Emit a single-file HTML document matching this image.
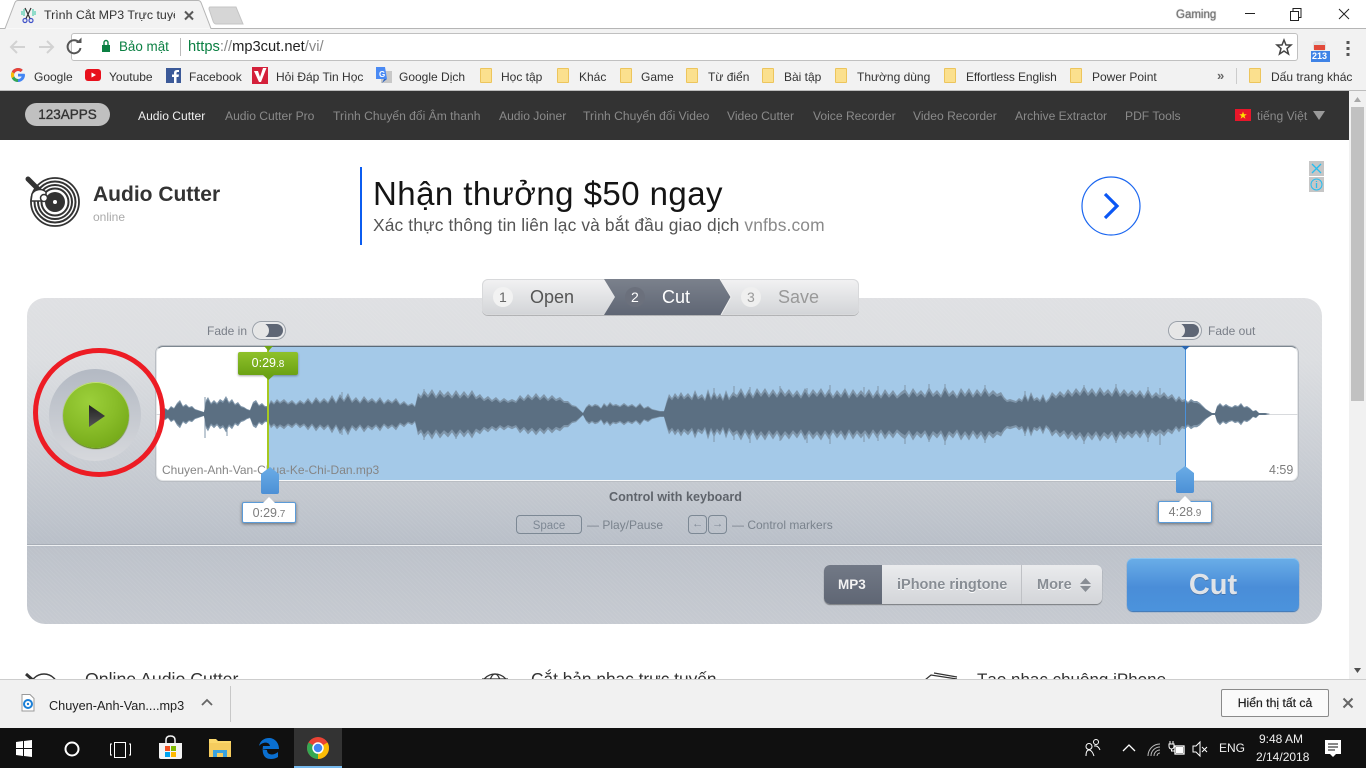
<!DOCTYPE html>
<html lang="vi">
<head>
<meta charset="utf-8">
<title>Trình Cắt MP3 Trực tuyến</title>
<style>
html,body{margin:0;padding:0;width:1366px;height:768px;overflow:hidden;background:#fff;font-family:"Liberation Sans","Noto Sans CJK SC",sans-serif}
div,span,svg{position:absolute;display:block}
b,i,small,em{position:static;display:inline}
.t{white-space:nowrap;line-height:1}
.b{font-size:12px;color:#333;top:71px}
.n{font-size:12.1px;color:#8a8a8a;top:110px}
.f{top:68px;width:12px;height:15px;background:#fbe08e;border:1px solid #edc55c;box-sizing:border-box;border-radius:1px}
.tm{background:#fff;border:1px solid #5b9bd8;border-radius:2px;box-shadow:0 1px 3px rgba(0,0,0,.45);box-sizing:border-box;text-align:center;color:#7d7d7d;font-size:12.5px;line-height:20px}
.tm small{font-size:10px}
.k{border:1px solid #7c8894;border-radius:4px;box-sizing:border-box;color:#7e8894;text-align:center;font-size:11.5px}
</style>
</head>
<body>

<!-- Window frame / tabs -->
<div style="left:0;top:0;width:1366px;height:29px;background:#fff"></div>
<svg style="left:0;top:0" width="1366" height="30" viewBox="0 0 1366 30">
<path d="M0 28.500H5L15 2.500Q16 .5 18 .5H198Q200 .5 201 2.500L211 28.500H1366" fill="#f2f2f2" stroke="#b5b5b5"/>
<path d="M210 7H236L243 24H216Q214 24 213 21L209 9Q209 7 210 7Z" fill="#d6d6d6" stroke="#c4c4c4"/>
<g fill="none" stroke="#3f51c8" stroke-width="1.200"><circle cx="25" cy="20.500" r="2"/><circle cx="31" cy="20.500" r="2"/><path d="M26 18.500L31 8M30 18.500L25 8" stroke="#333"/></g>
<path d="M22 11V15M24 9V16M33 9V16M35 11V15" stroke="#2fc4a0" stroke-width="1"/>
<path d="M185 11.500L193 19.500M193 11.500L185 19.500" stroke="#5a5a5a" stroke-width="2"/>
</svg>
<div class="t" style="left:44px;top:9px;width:131px;overflow:hidden;font-size:12.4px;color:#333">Trình Cắt MP3 Trực tuyến</div>
<div class="t" style="left:1176px;top:10px;font-size:11.5px;color:#777;text-shadow:0 0 1px #555">Gaming</div>
<svg style="left:1230px;top:0" width="136" height="28" viewBox="0 0 136 28">
<path d="M15 13.500H25" stroke="#222" stroke-width="1"/>
<path d="M60.500 11.500H68.500V20.500H60.500ZM63 11V8.500H71V17.500H69" fill="none" stroke="#222"/>
<path d="M109 9L119 19M119 9L109 19" stroke="#222" stroke-width="1"/>
</svg>

<!-- Toolbar -->
<div style="left:0;top:29px;width:1366px;height:61px;background:#f2f2f2"></div>
<div style="left:0;top:90px;width:1366px;height:1px;background:#bdbdbd"></div>
<div style="left:71px;top:33px;width:1227px;height:28px;background:#fff;border:1px solid #c0c0c0;border-radius:3px;box-sizing:border-box"></div>
<svg style="left:0;top:30px" width="130" height="32" viewBox="0 0 130 32">
<g fill="none" stroke="#d2d2d2" stroke-width="2"><path d="M25 17H11M17 11L11 17L17 23"/><path d="M39 17H53M47 11L53 17L47 23"/></g>
<path d="M79 12.500A6.500 6.500 0 1 0 80.500 18" fill="none" stroke="#555" stroke-width="2"/>
<path d="M76 13H81.500V7.500Z" fill="#555"/>
<rect x="102" y="15" width="8" height="7" fill="#0b8043"/>
<path d="M104 15V12.500A2 2 0 0 1 108 12.500V15" fill="none" stroke="#0b8043" stroke-width="1.400"/>
</svg>
<div class="t" style="left:119px;top:40px;font-size:13.4px;color:#0b8043">Bảo mật</div>
<div style="left:180px;top:38px;width:1px;height:18px;background:#bbb"></div>
<div class="t" style="left:188px;top:40px;font-size:14.700px;color:#0b8043">https<b style="font-weight:normal;color:#888">://</b><b style="font-weight:normal;color:#222">mp3cut.net</b><b style="font-weight:normal;color:#888">/vi/</b></div>
<svg style="left:1275px;top:38px" width="18" height="18" viewBox="0 0 18 18"><path d="M9 2L11 7H16L12 10.500L13.500 16L9 13L4.500 16L6 10.500L2 7H7Z" fill="none" stroke="#444" stroke-width="1.500"/></svg>
<svg style="left:1310px;top:40px" width="24" height="22" viewBox="0 0 24 22"><rect x="3" y="1" width="13" height="10" rx="3" fill="#e0e0e0"/><rect x="4" y="5" width="11" height="5" fill="#e24a3a"/><rect x="1" y="11" width="19" height="11" fill="#3f83e6"/></svg>
<div class="t" style="left:1312px;top:52px;font-size:9px;color:#fff;font-weight:bold">213</div>
<svg style="left:1343px;top:38px" width="10" height="20" viewBox="0 0 10 20"><g fill="#555"><rect x="3.500" y="3" width="3" height="3"/><rect x="3.500" y="9" width="3" height="3"/><rect x="3.500" y="15" width="3" height="3"/></g></svg>

<!-- Bookmarks -->
<svg style="left:10px;top:67px" width="16" height="16" viewBox="0 0 16 16">
<path d="M14.500 6.700H8V9.500H11.700C11.200 11 9.800 12 8 12A4 4 0 1 1 10.700 5L12.800 2.900A7 7 0 1 0 15 8Q15 7.300 14.500 6.700Z" fill="#4285f4"/>
<path d="M1.800 4.700L4.300 6.500A4 4 0 0 1 10.700 5L12.800 2.900A7 7 0 0 0 1.800 4.700Z" fill="#ea4335"/>
<path d="M1.800 11.300L4.300 9.500A4 4 0 0 0 8 12V15A7 7 0 0 1 1.800 11.300Z" fill="#34a853"/>
<path d="M1.800 4.700A7 7 0 0 0 1.800 11.300L4.300 9.500A4 4 0 0 1 4.300 6.500Z" fill="#fbbc05"/>
</svg>
<svg style="left:85px;top:68px" width="17" height="14" viewBox="0 0 17 14"><rect y="1" width="16" height="12" rx="3" fill="#e8101c"/><path d="M6.500 4.500L11 7L6.500 9.500Z" fill="#fff"/></svg>
<svg style="left:166px;top:68px" width="15" height="15" viewBox="0 0 15 15"><rect width="15" height="15" fill="#3b5998"/><path d="M10.500 15V9H12.500L13 6.500H10.500V5Q10.500 4 11.500 4H13V2H11Q8 2 8 5V6.500H6V9H8V15Z" fill="#fff"/></svg>
<svg style="left:252px;top:67px" width="16" height="17" viewBox="0 0 16 17"><rect width="16" height="17" fill="#d4203a"/><path d="M2 4L7 15H9L14.500 1H11L8 10L6 4Z" fill="#fff"/></svg>
<svg style="left:375px;top:67px" width="17" height="17" viewBox="0 0 17 17"><rect x="6" y="4" width="11" height="12" fill="#c8c8c8"/><path d="M1 0H10L12 12H1Z" fill="#4a8af4"/><path d="M9 12L7 16L12 12Z" fill="#3367c0"/></svg>
<div class="t" style="left:379px;top:71px;font-size:8px;font-weight:bold;color:#fff">G</div>
<div class="f" style="left:480px"></div><div class="f" style="left:557px"></div><div class="f" style="left:620px"></div><div class="f" style="left:686px"></div><div class="f" style="left:762px"></div><div class="f" style="left:835px"></div><div class="f" style="left:944px"></div><div class="f" style="left:1070px"></div><div class="f" style="left:1249px"></div>
<div class="t b" style="left:34px">Google</div>
<div class="t b" style="left:109px">Youtube</div>
<div class="t b" style="left:189px">Facebook</div>
<div class="t b" style="left:276px">Hỏi Đáp Tin Học</div>
<div class="t b" style="left:399px">Google Dịch</div>
<div class="t b" style="left:501px">Học tập</div>
<div class="t b" style="left:579px">Khác</div>
<div class="t b" style="left:641px">Game</div>
<div class="t b" style="left:708px">Từ điển</div>
<div class="t b" style="left:784px">Bài tập</div>
<div class="t b" style="left:857px">Thường dùng</div>
<div class="t b" style="left:966px;letter-spacing:-.1px">Effortless English</div>
<div class="t b" style="left:1092px">Power Point</div>
<div class="t" style="left:1217px;top:69px;font-size:13px;font-weight:bold;color:#666">»</div>
<div style="left:1236px;top:68px;width:1px;height:16px;background:#ccc"></div>
<div class="t b" style="left:1271px">Dấu trang khác</div>

<!-- Site nav -->
<div style="left:0;top:91px;width:1349px;height:49px;background:#333"></div>
<div class="t" style="left:25px;top:103px;width:85px;height:23px;border-radius:12px;background:#c0c0c0;color:#333;font-size:13.5px;line-height:24px;text-align:center;-webkit-text-stroke:.35px #333">123APPS</div>
<div class="t n" style="left:138px;color:#f0f0f0">Audio Cutter</div>
<div class="t n" style="left:225px">Audio Cutter Pro</div>
<div class="t n" style="left:333px">Trình Chuyển đổi Âm thanh</div>
<div class="t n" style="left:499px">Audio Joiner</div>
<div class="t n" style="left:583px">Trình Chuyển đổi Video</div>
<div class="t n" style="left:727px">Video Cutter</div>
<div class="t n" style="left:813px">Voice Recorder</div>
<div class="t n" style="left:913px">Video Recorder</div>
<div class="t n" style="left:1015px">Archive Extractor</div>
<div class="t n" style="left:1125px">PDF Tools</div>
<svg style="left:1235px;top:109px" width="16" height="12" viewBox="0 0 16 12"><rect width="16" height="12" fill="#e8162a"/><path d="M8 2.500L9 5.300H11.800L9.500 7L10.400 9.800L8 8L5.600 9.800L6.500 7L4.200 5.300H7Z" fill="#ffde00"/></svg>
<div class="t n" style="left:1257px">tiếng Việt</div>
<svg style="left:1313px;top:111px" width="12" height="9" viewBox="0 0 12 9"><path d="M0 0H12L6 9Z" fill="#9a9a9a"/></svg>

<!-- Scrollbar -->
<div style="left:1349px;top:91px;width:17px;height:589px;background:#f1f1f1"></div>
<div style="left:1351px;top:107px;width:13px;height:294px;background:#c1c1c1"></div>
<svg style="left:1349px;top:95px" width="17" height="8" viewBox="0 0 17 8"><path d="M5 7L8.500 2L12 7Z" fill="#a8a8a8"/></svg>
<svg style="left:1349px;top:665px" width="17" height="10" viewBox="0 0 17 10"><path d="M5 3L8.500 8L12 3Z" fill="#505050"/></svg>

<!-- Logo -->
<svg style="left:24px;top:176px" width="58" height="54" viewBox="0 0 58 54">
<circle cx="31" cy="26" r="24" fill="#fff" stroke="#333" stroke-width="1.800"/>
<g fill="none" stroke="#333" stroke-width="2"><circle cx="31" cy="26" r="20.500"/><circle cx="31" cy="26" r="17"/><circle cx="31" cy="26" r="13.500"/></g>
<circle cx="31" cy="26" r="10" fill="#333"/><circle cx="31" cy="26" r="2" fill="#fff"/>
<path d="M4 3L15 14" stroke="#333" stroke-width="5" stroke-linecap="round"/>
<path d="M7 25H22V16A9 9 0 0 0 8 18Z" fill="#fff" stroke="#333" stroke-width="1.500"/>
<circle cx="20" cy="22" r="3.500" fill="#fff" stroke="#333" stroke-width="1.500"/>
</svg>
<div class="t" style="left:93px;top:184px;font-size:21px;font-weight:bold;color:#333">Audio Cutter</div>
<div class="t" style="left:93px;top:211px;font-size:12px;color:#aaa">online</div>

<!-- Ad -->
<div style="left:360px;top:167px;width:2px;height:78px;background:#0b5cf0"></div>
<div class="t" style="left:373px;top:177px;font-size:33px;color:#141414;letter-spacing:.45px">Nhận thưởng $50 ngay</div>
<div class="t" style="left:373px;top:217px;font-size:17.400px;color:#555;letter-spacing:.12px">Xác thực thông tin liên lạc và bắt đầu giao dịch <b style="font-weight:normal;color:#8a8a8a">vnfbs.com</b></div>
<svg style="left:1080px;top:175px" width="62" height="62" viewBox="0 0 62 62"><circle cx="31" cy="31" r="29" fill="#fff" stroke="#1a66f0" stroke-width="1.200"/><path d="M25 19L37 31L25 43" fill="none" stroke="#0b57f5" stroke-width="3.200"/></svg>
<svg style="left:1309px;top:161px" width="15" height="31" viewBox="0 0 15 31"><rect width="15" height="15" fill="#c6c6c6"/><rect y="16" width="15" height="15" fill="#c6c6c6"/><path d="M3 3L12 12M12 3L3 12" stroke="#28bdf0" stroke-width="1.300"/><circle cx="7.500" cy="23.500" r="5.500" fill="none" stroke="#28bdf0"/><path d="M7.500 22V27M7.500 20V21" stroke="#28bdf0" stroke-width="1.300"/></svg>

<!-- Cutter panel -->
<div style="left:27px;top:298px;width:1295px;height:326px;border-radius:18px;background-color:#c3c8cf;background-image:repeating-linear-gradient(45deg,rgba(255,255,255,.05) 0 1px,transparent 1px 3px),linear-gradient(#dfe0e3 0,#dcdee1 60px,#b9bfc8 248px,#b9bfc8 249px,#bdc2ca 250px,#c6cad1 326px)"></div>
<div style="left:27px;top:545px;width:1295px;height:1px;background:#eef0f2"></div>
<div style="left:27px;top:544px;width:1295px;height:1px;background:#a7adb6"></div>

<!-- Steps -->
<div style="left:482px;top:279px;width:377px;height:36px;border-radius:6px;background:linear-gradient(#f2f2f3,#d2d4d7);box-shadow:0 1px 0 rgba(0,0,0,.2),inset 0 0 0 1px #d8d9db"></div>
<svg style="left:600px;top:279px" width="140" height="36" viewBox="0 0 140 36"><defs><linearGradient id="sg" x1="0" y1="0" x2="0" y2="1"><stop offset="0" stop-color="#7b818c"/><stop offset="1" stop-color="#5f6674"/></linearGradient></defs><path d="M4 0H120L131 18L121 36H4L15 18Z" fill="url(#sg)"/><path d="M120 0L131 18L121 36" fill="none" stroke="#eee" stroke-width="1"/></svg>
<div style="left:493px;top:287px;width:20px;height:20px;border-radius:50%;background:#f2f2f2"></div>
<div style="left:625px;top:287px;width:20px;height:20px;border-radius:50%;background:#6b707c"></div>
<div style="left:741px;top:287px;width:20px;height:20px;border-radius:50%;background:#efefef"></div>
<div class="t" style="left:499px;top:290px;font-size:14px;color:#666">1</div>
<div class="t" style="left:530px;top:288px;font-size:18px;color:#555">Open</div>
<div class="t" style="left:631px;top:290px;font-size:14px;color:#fff">2</div>
<div class="t" style="left:662px;top:288px;font-size:18px;color:#fff">Cut</div>
<div class="t" style="left:747px;top:290px;font-size:14px;color:#999">3</div>
<div class="t" style="left:778px;top:288px;font-size:18px;color:#999">Save</div>

<!-- Fade toggles -->
<div class="t" style="left:207px;top:325px;font-size:12px;color:#7a7f88">Fade in</div>
<div class="t" style="left:1208px;top:325px;font-size:12px;color:#7a7f88">Fade out</div>
<div style="left:253px;top:322px;width:32px;height:17px;border-radius:9px;background:#5e6675;border:2px solid #e8e9eb;box-shadow:0 0 0 1px #9aa0a8;box-sizing:border-box"></div>
<div style="left:254px;top:323px;width:15px;height:15px;border-radius:50%;background:#e6e6e6"></div>
<div style="left:1169px;top:322px;width:32px;height:17px;border-radius:9px;background:#5e6675;border:2px solid #e8e9eb;box-shadow:0 0 0 1px #9aa0a8;box-sizing:border-box"></div>
<div style="left:1170px;top:323px;width:15px;height:15px;border-radius:50%;background:#e6e6e6"></div>

<!-- Wave box -->
<div style="left:156px;top:346px;width:1142px;height:135px;background:#fff;border-radius:7px;border:1px solid #e4e6e8;border-top:1px solid #7d8790;box-sizing:border-box;box-shadow:0 0 0 1px #b9bdc3"></div>
<div style="left:269px;top:346px;width:916px;height:134px;background:#a4c9e8;border-top:1px solid #5a6a78;box-sizing:border-box"></div>
<div style="left:269px;top:480px;width:916px;height:1px;background:#f6f7f8"></div>
<div style="left:156px;top:414px;width:1142px;height:1px;background:#d8dadd"></div>
<svg style="left:156px;top:346px;overflow:visible" width="1142" height="135" viewBox="156 346 1142 135">
<defs><path id="wv" d="M160,0 163,-3 165,-6 168,-4 171,-8 174,-6 177,-11 180,-14 183,-8 186,-10 189,-7 192,-8 195,-5 198,-4 201,-3 204,-2 206,-14 208,-17 211,-11 214,-14 217,-11 220,-15 223,-13 226,-18 229,-12 232,-15 235,-10 238,-12 241,-8 244,-7 247,-5 250,-4 253,-12 256,-14 259,-9 262,-11 265,-8 268,-8 271,-14 274,-11 277,-15 280,-12 284,-15 288,-11 292,-14 296,-10 300,-14 304,-11 308,-16 312,-11 316,-17 320,-12 324,-16 328,-12 332,-19 336,-12 340,-20 344,-14 348,-21 352,-13 356,-17 360,-12 364,-18 368,-13 372,-16 376,-12 380,-17 384,-11 388,-15 392,-12 396,-16 400,-10 404,-13 408,-9 412,-11 415,-8 418,-21 421,-18 424,-24 428,-19 432,-25 436,-18 440,-24 444,-19 448,-23 452,-18 456,-24 460,-18 464,-23 468,-18 472,-24 476,-17 480,-20 484,-15 488,-18 492,-14 496,-17 500,-13 504,-16 508,-13 512,-15 516,-13 520,-19 524,-15 528,-20 532,-16 536,-21 540,-16 544,-20 548,-15 552,-19 556,-15 560,-17 564,-13 568,-13 572,-9 576,-8 580,-4 583,-1 586,-7 589,-10 592,-8 595,-10 598,-9 601,-6 604,-11 607,-8 610,-12 613,-9 616,-10 620,-8 624,-11 628,-8 632,-10 636,-7 640,-11 644,-6 648,-8 652,-5 656,-4 660,-3 664,-3 667,-14 669,-20 672,-16 675,-21 678,-17 681,-22 684,-17 688,-21 692,-16 695,-24 698,-17 702,-20 705,-15 708,-25 711,-16 714,-23 717,-17 720,-21 723,-15 726,-24 729,-16 733,-22 737,-19 741,-26 745,-18 749,-25 753,-18 757,-26 761,-20 765,-26 769,-19 773,-25 777,-19 781,-26 785,-20 789,-25 793,-19 797,-24 801,-18 805,-26 809,-19 813,-25 817,-20 821,-26 825,-19 829,-25 833,-18 837,-24 841,-19 845,-26 849,-18 853,-25 857,-19 861,-24 865,-19 869,-25 873,-18 877,-24 881,-18 885,-25 889,-19 893,-24 897,-18 901,-22 905,-25 909,-19 913,-26 917,-20 921,-24 925,-19 929,-27 933,-20 937,-24 941,-19 945,-28 949,-20 953,-24 957,-18 961,-26 965,-20 969,-26 973,-19 977,-25 981,-20 985,-27 989,-20 993,-24 997,-20 1001,-22 1004,-17 1007,-14 1010,-15 1013,-14 1016,-13 1019,-16 1022,-14 1025,-21 1028,-14 1031,-22 1034,-15 1037,-17 1040,-14 1043,-20 1046,-13 1049,-16 1052,-22 1056,-18 1060,-23 1064,-19 1068,-25 1072,-20 1076,-26 1080,-21 1084,-28 1088,-21 1092,-26 1096,-20 1100,-27 1104,-21 1108,-25 1112,-20 1116,-28 1120,-20 1124,-25 1128,-20 1132,-24 1136,-19 1140,-24 1144,-18 1148,-25 1152,-18 1156,-22 1160,-18 1164,-22 1168,-17 1172,-20 1176,-14 1179,-18 1182,-14 1185,-15 1188,-12 1191,-15 1194,-13 1197,-13 1200,-11 1203,-8 1206,-5 1209,-3 1212,-1 1215,-1 1217,-8 1220,-11 1223,-8 1226,-10 1229,-8 1232,-7 1235,-9 1238,-8 1241,-11 1244,-7 1247,-8 1250,-6 1253,-3 1256,-4 1259,-1 1265,-1 1270,0Z"/></defs>
<path d="M205 397V438M227 398V436M342 392V435M424 389V440M440 390V438M456 391V439M714 388V442M734 386V440M750 387V443M780 386V441M807 388V443M830 385V444M864 387V442M878 386V441M905 385V444M929 384V442M945 384V445M985 385V443M1025 391V436M1084 385V444M1116 384V443M1148 387V442M1160 388V445" stroke="#7f95a9" stroke-width="1" fill="none"/>
<g fill="#7f95a9" transform="translate(0,414)"><use href="#wv"/><use href="#wv" transform="scale(1,-1.020)"/></g>
<g fill="#5b6f82" transform="translate(0,414)"><use href="#wv" transform="scale(1,.85)"/><use href="#wv" transform="scale(1,-.85)"/></g>
</svg>
<div class="t" style="left:162px;top:464px;font-size:12px;color:#858585">Chuyen-Anh-Van-Chua-Ke-Chi-Dan.mp3</div>
<div class="t" style="left:1269px;top:464px;font-size:12.500px;color:#7d7d7d">4:59</div>

<!-- Start marker -->
<div style="left:267px;top:347px;width:2px;height:125px;background:#a6c821"></div>
<svg style="left:264px;top:346px" width="9" height="5" viewBox="0 0 9 5"><path d="M0 0H9L4.500 5Z" fill="#6ea315"/></svg>
<div class="t" style="left:238px;top:352px;width:60px;height:23px;background:linear-gradient(#8fc12a,#6ba214);border-radius:2px;color:#fff;font-size:12.500px;line-height:23px;text-align:center;box-shadow:0 1px 2px rgba(0,0,0,.35)">0:29<small style="font-size:10px">.8</small></div>
<svg style="left:263px;top:375px" width="11" height="5" viewBox="0 0 11 5"><path d="M0 0H11L5.500 5Z" fill="#6ba214"/></svg>
<svg style="left:260px;top:467px" width="20" height="29" viewBox="0 0 20 29"><defs><linearGradient id="hb" x1="0" y1="0" x2="0" y2="1"><stop offset="0" stop-color="#6aace6"/><stop offset="1" stop-color="#4c90d6"/></linearGradient></defs><path d="M1 7L10 0L19 7V25Q19 27 17 27H3Q1 27 1 25Z" fill="url(#hb)"/></svg>
<div class="tm" style="left:242px;top:502px;width:54px;height:21px">0:29<small>.7</small></div>
<svg style="left:263px;top:497px" width="12" height="6" viewBox="0 0 12 6"><path d="M0 6L6 0L12 6Z" fill="#fff"/></svg>

<!-- End marker -->
<div style="left:1185px;top:347px;width:1px;height:125px;background:#4a90d9"></div>
<svg style="left:1181px;top:346px" width="9" height="4" viewBox="0 0 9 4"><path d="M0 0H9L4.500 4Z" fill="#2a65b0"/></svg>
<svg style="left:1175px;top:466px" width="20" height="29" viewBox="0 0 20 29"><path d="M1 7L10 0L19 7V25Q19 27 17 27H3Q1 27 1 25Z" fill="url(#hb)"/></svg>
<div class="tm" style="left:1158px;top:501px;width:54px;height:22px;line-height:21px">4:28<small>.9</small></div>
<svg style="left:1179px;top:496px" width="12" height="6" viewBox="0 0 12 6"><path d="M0 6L6 0L12 6Z" fill="#fff"/></svg>

<!-- Play button -->
<div style="left:49px;top:369px;width:92px;height:92px;border-radius:50%;background:linear-gradient(#b3b9c3,#d6d8dc)"></div>
<div style="left:63px;top:382px;width:66px;height:66px;border-radius:50%;background:radial-gradient(circle at 40% 30%,#9bcf3a 0,#88bc28 45%,#6a9f10 100%);box-shadow:inset 0 1px 0 #c4e27a,0 1px 1px #55790f"></div>
<svg style="left:89px;top:405px" width="16" height="22" viewBox="0 0 16 22"><defs><linearGradient id="pt" x1="0" y1="0" x2="0" y2="1"><stop offset="0" stop-color="#222"/><stop offset="1" stop-color="#555"/></linearGradient></defs><path d="M0 0L16 11L0 22Z" fill="url(#pt)"/></svg>
<div style="left:33px;top:348px;width:132px;height:129px;border-radius:50%;border:5px solid #ed1c24;box-sizing:border-box"></div>

<!-- Keyboard hints -->
<div class="t" style="left:609px;top:491px;font-size:12.600px;font-weight:bold;color:#5f646b">Control with keyboard</div>
<div class="t k" style="left:516px;top:515px;width:66px;height:19px;line-height:20px">Space</div>
<div class="t" style="left:587px;top:519px;font-size:12px;color:#7a838d">— Play/Pause</div>
<div class="t k" style="left:688px;top:515px;width:19px;height:19px;line-height:17px">←</div>
<div class="t k" style="left:708px;top:515px;width:19px;height:19px;line-height:17px">→</div>
<div class="t" style="left:732px;top:519px;font-size:12px;color:#7a838d">— Control markers</div>

<!-- Format -->
<div style="left:824px;top:565px;width:278px;height:39px;border-radius:6px;background:linear-gradient(#eaebed,#d3d5d9);box-shadow:0 1px 1px rgba(0,0,0,.4)"></div>
<div style="left:824px;top:565px;width:58px;height:39px;border-radius:6px 0 0 6px;background:linear-gradient(#727986,#5f6674)"></div>
<div style="left:1021px;top:565px;width:1px;height:39px;background:#bfc1c5"></div>
<div class="t" style="left:838px;top:578px;font-size:13.500px;font-weight:bold;color:#f2f2f2">MP3</div>
<div class="t" style="left:897px;top:578px;font-size:14.500px;font-weight:bold;color:#888d94;text-shadow:0 1px 0 #fff">iPhone ringtone</div>
<div class="t" style="left:1037px;top:578px;font-size:14.500px;font-weight:bold;color:#888d94;text-shadow:0 1px 0 #fff">More</div>
<svg style="left:1080px;top:578px" width="11" height="14" viewBox="0 0 11 14"><path d="M0 6L5.500 0L11 6ZM0 8H11L5.500 14Z" fill="#888d94"/></svg>

<!-- Cut button -->
<div class="t" style="left:1127px;top:558px;width:172px;height:53px;border-radius:6px;background:linear-gradient(#6aaee8,#4a8dd8 55%,#4b93dc);box-shadow:0 1px 1px #2f6fb5,inset 0 1px 0 #8cc4f0;color:#dfe3e8;font-size:29px;font-weight:bold;text-align:center;line-height:54px;text-shadow:0 1px 0 rgba(60,90,130,.5)">Cut</div>

<!-- Below fold text -->
<div class="t" style="left:85px;top:671px;font-size:17.700px;color:#333">Online Audio Cutter</div>
<div class="t" style="left:531px;top:671px;font-size:17.300px;color:#333">Cắt bản nhạc trực tuyến</div>
<div class="t" style="left:977px;top:671px;font-size:17px;color:#333">Tạo nhạc chuông iPhone</div>
<svg style="left:24px;top:672px" width="40" height="9" viewBox="0 0 40 9"><circle cx="20" cy="16" r="14" fill="none" stroke="#333" stroke-width="1.500"/><path d="M2 2L10 9" stroke="#333" stroke-width="3"/></svg>
<svg style="left:478px;top:672px" width="34" height="9" viewBox="0 0 34 9"><g fill="none" stroke="#333" stroke-width="1.200"><circle cx="17" cy="16" r="14"/><ellipse cx="17" cy="16" rx="6" ry="14"/><path d="M4 7H30"/></g></svg>
<svg style="left:924px;top:672px" width="36" height="9" viewBox="0 0 36 9"><g fill="none" stroke="#333" stroke-width="1.200"><path d="M1 8L7 3L33 7M10 1L33 5"/></g></svg>

<!-- Download bar -->
<div style="left:0;top:679px;width:1366px;height:49px;background:#f1f1f1;border-top:1px solid #cdcdcd;box-sizing:border-box"></div>
<svg style="left:21px;top:694px" width="14" height="18" viewBox="0 0 14 18"><path d="M1 .5H9L13 4.500V17H1Z" fill="#fff" stroke="#9a9a9a"/><circle cx="7" cy="10" r="4" fill="none" stroke="#1b7fd6" stroke-width="2"/><circle cx="7" cy="10" r="1.200" fill="#1b7fd6"/></svg>
<div class="t" style="left:49px;top:700px;font-size:12.700px;color:#222">Chuyen-Anh-Van....mp3</div>
<svg style="left:200px;top:697px" width="14" height="10" viewBox="0 0 14 10"><path d="M2 8L7 3L12 8" fill="none" stroke="#666" stroke-width="1.800"/></svg>
<div style="left:230px;top:686px;width:1px;height:36px;background:#c8c8c8"></div>
<div class="t" style="left:1221px;top:689px;width:108px;height:28px;border:1px solid #8a8a8a;border-radius:2px;background:#fafafa;box-sizing:border-box;font-size:12.200px;color:#222;text-align:center;line-height:26px;-webkit-text-stroke:.2px #222">Hiển thị tất cả</div>
<svg style="left:1341px;top:696px" width="14" height="14" viewBox="0 0 14 14"><path d="M2.500 2.500L11.500 11.500M11.500 2.500L2.500 11.500" stroke="#666" stroke-width="2"/></svg>

<!-- Taskbar -->
<div style="left:0;top:728px;width:1366px;height:40px;background:#101010"></div>
<div style="left:294px;top:728px;width:48px;height:40px;background:#333"></div>
<div style="left:294px;top:766px;width:48px;height:2px;background:#76b9ed"></div>
<svg style="left:0;top:728px" width="342" height="40" viewBox="0 0 342 40">
<path d="M16 14L23 13V20H16ZM24 13L32 12V20H24ZM16 21H23V28L16 27ZM24 21H32V29L24 28Z" fill="#fff"/>
<circle cx="72" cy="21" r="6.500" fill="none" stroke="#fff" stroke-width="2"/>
<path d="M112 16H110.500V27H112M129 16H130.500V27H129" fill="none" stroke="#fff" stroke-width="1"/><rect x="114.500" y="14.500" width="11" height="15" fill="none" stroke="#fff"/>
<path d="M159 15H182V29Q182 31 180 31H161Q159 31 159 29Z" fill="#f4f4f4"/><path d="M166 15V12Q166 8 170.500 8Q175 8 175 12V15" fill="none" stroke="#f4f4f4" stroke-width="1.500"/>
<rect x="165" y="18" width="5" height="5" fill="#f25022"/><rect x="171" y="18" width="5" height="5" fill="#7fba00"/><rect x="165" y="24" width="5" height="5" fill="#00a4ef"/><rect x="171" y="24" width="5" height="5" fill="#ffb900"/>
<path d="M209 11H216L218 13H231V29H209Z" fill="#fbd86c"/><path d="M209 15H231V29H209Z" fill="#f5cc5e"/><path d="M213 29V22H227V29H223V25H217V29Z" fill="#3aa3de"/>
<path d="M261 21H279C279 14 274 10 269 10C264 10 260 13 259 18C262 14 269 13 270 18H263C262 24 263 31 271 31Q275 31 278 29V24C273 28 267 27 267 22" fill="#0a6fd0"/>
<circle cx="318" cy="20" r="11" fill="#ea4335"/>
<path d="M318 20L327.500 14.500A11 11 0 0 1 318 31Z" fill="#fbbc05"/>
<path d="M318 20L318 31A11 11 0 0 1 308.500 14.500Z" fill="#34a853"/>
<circle cx="318" cy="20" r="5" fill="#4285f4" stroke="#fff" stroke-width="1.500"/>
</svg>
<svg style="left:1080px;top:735px" width="30" height="26" viewBox="0 0 30 26"><g fill="none" stroke="#fff"><circle cx="9" cy="11.500" r="3"/><path d="M6 21Q6 15 9 15Q12 15 14 21"/><circle cx="16" cy="7" r="2.500"/><path d="M14 11Q18 10 20 15"/></g></svg>
<svg style="left:1120px;top:738px" width="100" height="22" viewBox="0 0 100 22"><g fill="none" stroke="#fff"><path d="M3 13L9 7L15 13" stroke-width="1.300"/><path d="M28 18A12 12 0 0 1 40 6M31 18A9 9 0 0 1 40 9M34 18A6 6 0 0 1 40 12M37 18A3 3 0 0 1 40 15" stroke="#bbb"/><rect x="55" y="8" width="9" height="8" stroke-width="1.300"/><path d="M50 3V6M53 3V6M49 6H54V8Q54 11 51.500 11Q49 11 49 8ZM51.500 11V13H55"/><path d="M73 8H76L80 4V18L76 14H73ZM82 9L87 14M87 9L82 14"/></g><rect x="56" y="9" width="7" height="6" fill="#fff"/></svg>
<div class="t" style="left:1219px;top:742px;font-size:12px;color:#f0f0f0">ENG</div>
<div class="t" style="left:1259px;top:733px;font-size:12px;color:#f0f0f0">9:48 AM</div>
<div class="t" style="left:1256px;top:751px;font-size:12px;color:#f0f0f0">2/14/2018</div>
<svg style="left:1323px;top:738px" width="20" height="22" viewBox="0 0 20 22"><path d="M2 2H18V16H13L10 19L7 16H2Z" fill="#fff"/><path d="M5 6H15M5 9H15M5 12H12" stroke="#101010"/></svg>

</body>
</html>
